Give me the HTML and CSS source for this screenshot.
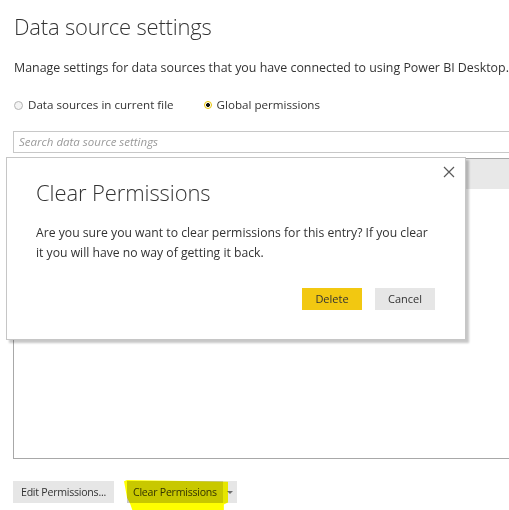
FILE: index.html
```html
<!DOCTYPE html>
<html>
<head>
<meta charset="utf-8">
<link rel="stylesheet" href="styles.css">
</head>
<body>
<div class="page">
  <h1 class="title">Data source settings</h1>
  <p class="subtitle">Manage settings for data sources that you have connected to using Power BI Desktop.</p>
  <div class="radios">
    <label class="radio"><span class="dot"></span>Data sources in current file</label>
    <label class="radio checked"><span class="dot"></span>Global permissions</label>
  </div>
  <div class="search">Search data source settings</div>
  <div class="list">
    <div class="list-head"></div>
  </div>
  <div class="actions">
    <div class="btn">Edit Permissions...</div>
    <div class="btn split"><span class="main">Clear Permissions</span><span class="arrow"></span></div>
  </div>
</div>

<div class="dialog">
  <svg class="close" width="12" height="12" viewBox="0 0 12 12"><path d="M1 1L11 11M11 1L1 11" stroke="#5a5a5a" stroke-width="1.2" fill="none"/></svg>
  <h2 class="dlg-title">Clear Permissions</h2>
  <p class="dlg-text">Are you sure you want to clear permissions for this entry? If you clear it you will have no way of getting it back.</p>
  <div class="dlg-buttons">
    <div class="dbtn primary">Delete</div>
    <div class="dbtn">Cancel</div>
  </div>
</div>

<div class="highlight"></div>
</body>
</html>
```

FILE: styles.css
```css
html, body {
  margin: 0;
  padding: 0;
  background: #ffffff;
  width: 509px;
  height: 510px;
  overflow: hidden;
  font-family: "Open Sans", "Noto Sans", sans-serif;
  color: #333333;
}
.page {
  padding: 10px 0 0 13px;
  position: relative;
}
.title {
  margin: 0 0 0 1px;
  font-size: 22px;
  font-weight: 300;
  line-height: 32px;
  color: #333;
  letter-spacing: -0.2px;
}
.subtitle {
  margin: 17px 0 0 1px;
  font-size: 12.4px;
  line-height: 18px;
  white-space: nowrap;
  color: #333;
}
.radios {
  display: flex;
  gap: 30px;
  margin: 20px 0 0 1px;
  font-size: 11.6px;
  line-height: 16px;
}
.radio {
  display: flex;
  align-items: center;
  gap: 5px;
}
.dot {
  width: 7px;
  height: 7px;
  border-radius: 50%;
  border: 1px solid #b4b4b4;
  background: #f4f4f4;
  box-sizing: content-box;
}
.checked .dot {
  border: 1.5px solid #e8c300;
  width: 6px;
  height: 6px;
  background: radial-gradient(circle, #111 0 1.8px, #fff 2.2px);
}
.search {
  margin-top: 18px;
  height: 20px;
  border: 1px solid #c8c8c8;
  border-right: none;
  font-style: italic;
  color: #9a9a9a;
  font-size: 11.5px;
  line-height: 20px;
  padding-left: 5px;
}
.list {
  margin-top: 5px;
  height: 299px;
  border: 1px solid #a8a8a8;
  border-right: none;
}
.list-head {
  height: 30px;
  background: #e8e8e8;
}
.actions {
  display: flex;
  gap: 13px;
  margin-top: 22px;
}
.btn {
  height: 22px;
  background: #e6e6e6;
  font-size: 10.6px;
  line-height: 22px;
  color: #333;
  padding: 0 8px;
  letter-spacing: -0.25px;
}
.btn.split {
  display: flex;
  padding: 0;
}
.split .main {
  background: #c8c8c8;
  padding: 0 6px 0 6px;
}
.split .arrow {
  width: 14px;
  position: relative;
}
.split .arrow::after {
  content: "";
  position: absolute;
  left: 4px;
  top: 10px;
  border-left: 3px solid transparent;
  border-right: 3px solid transparent;
  border-top: 3px solid #6e6e6e;
}
.dialog {
  position: absolute;
  left: 6px;
  top: 157px;
  width: 429px;
  height: 181px;
  background: #fff;
  border: 1px solid #c6c6c6;
  box-shadow: 3px 3px 2px rgba(0,0,0,0.22);
  padding: 0 0 0 29px;
  box-sizing: content-box;
}
.close {
  position: absolute;
  right: 10px;
  top: 8px;
}
.dlg-title {
  margin: 17px 0 0 0;
  font-size: 22px;
  font-weight: 300;
  line-height: 34px;
  color: #333;
  letter-spacing: -0.1px;
}
.dlg-text {
  margin: 14px 0 0 0;
  width: 398px;
  font-size: 12.2px;
  line-height: 20px;
  color: #333;
}
.dlg-buttons {
  display: flex;
  justify-content: flex-end;
  gap: 13px;
  margin: 25px 30px 0 0;
}
.dbtn {
  width: 60px;
  height: 22px;
  line-height: 22px;
  text-align: center;
  font-size: 11px;
  background: #e6e6e6;
  color: #333;
}
.dbtn.primary {
  background: #f2c811;
}
.highlight {
  position: absolute;
  left: 124px;
  top: 480px;
  width: 104px;
  height: 30px;
  background: #ffff00;
  mix-blend-mode: multiply;
  clip-path: polygon(0 4%, 3% 0, 100% 6%, 100% 75%, 96% 82%, 96% 100%, 8% 100%, 6% 80%, 3% 60%);
}
```
